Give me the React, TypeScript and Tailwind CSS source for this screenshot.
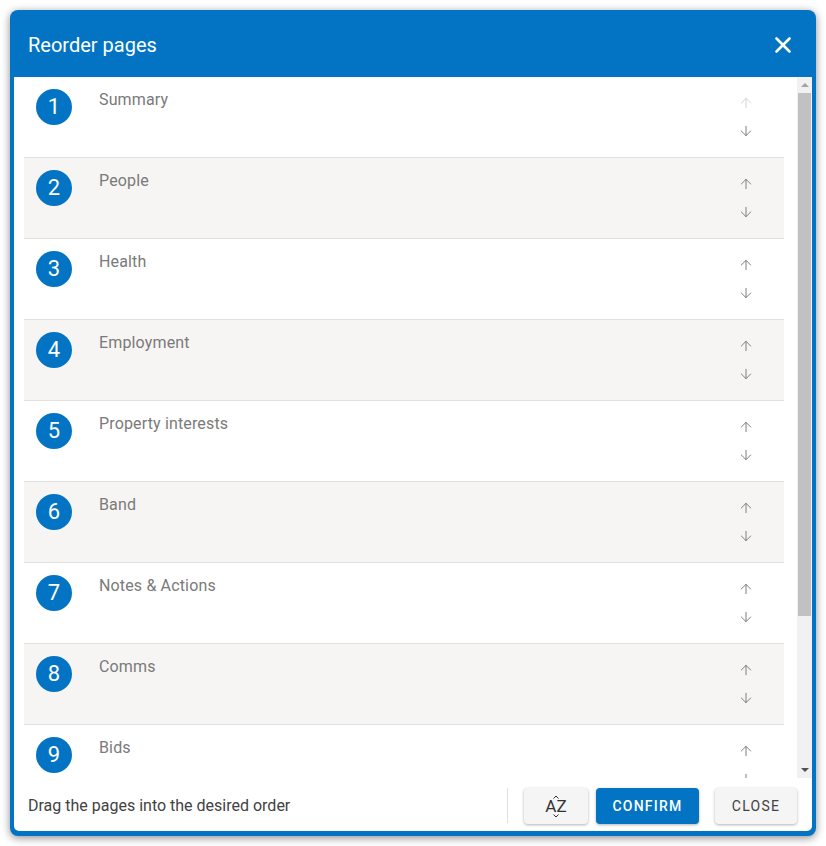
import { ArrowDown, ArrowUp, X } from "lucide-react";

const pages = [
  "Summary",
  "People",
  "Health",
  "Employment",
  "Property interests",
  "Band",
  "Notes & Actions",
  "Comms",
  "Bids",
];

function PageRow({ index, name }: { index: number; name: string }) {
  const shaded = index % 2 === 1;
  return (
    <div
      className={`flex h-[81px] shrink-0 border-b border-[#e0e0e0] pt-[12px] pl-[12px] ${
        shaded ? "bg-[#f6f5f4]" : "bg-white"
      }`}
    >
      <span className="flex h-[36px] w-[36px] shrink-0 items-center justify-center rounded-full bg-[#0274c3] text-[22px] leading-none text-white">
        {index + 1}
      </span>
      <span className="ml-[27px] mt-[1px] flex-1 text-[16px] leading-[20px] tracking-[0.15px] text-[#7a7a7a]">{name}</span>
      <div className="mr-[30px] flex w-[16px] flex-col items-center pt-[6px]">
        <ArrowUp size={16} strokeWidth={1.4} className={index === 0 ? "text-[#cfcfcf]" : "text-[#757575]"} />
        <ArrowDown size={16} strokeWidth={1.4} className="mt-[12px] text-[#757575]" />
      </div>
    </div>
  );
}

function FakeScrollbar() {
  return (
    <div className="flex w-[15px] shrink-0 flex-col bg-[#f1f1f1]">
      <div className="flex h-[16px] items-center justify-center">
        <span className="h-0 w-0 border-x-[4px] border-b-[4px] border-x-transparent border-b-[#a3a3a3]" />
      </div>
      <div className="mx-[1px] h-[523px] bg-[#c1c1c1]" />
      <div className="flex-1" />
      <div className="flex h-[16px] items-center justify-center">
        <span className="h-0 w-0 border-x-[4px] border-t-[4px] border-x-transparent border-t-[#505050]" />
      </div>
    </div>
  );
}

export default function App() {
  return (
    <div className="h-[846px] w-[826px] bg-white p-[10px] font-['Roboto',_'Liberation_Sans',_sans-serif]">
      <div className="flex h-[826px] w-[806px] flex-col rounded-[8px] bg-[#0274c3] shadow-[0_2px_9px_rgba(0,0,0,0.45)]">
        <header className="flex h-[67px] shrink-0 items-center justify-between pl-[18px] pr-[20px] pt-[2px]">
          <h1 className="text-[20px] text-white">Reorder pages</h1>
          <X size={26} strokeWidth={2.4} className="text-white" />
        </header>
        <div className="mx-[4px] mb-[5px] flex flex-1 flex-col overflow-hidden rounded-b-[5px] bg-white">
          <div className="flex h-[701px] shrink-0">
            <div className="flex flex-1 flex-col overflow-hidden pl-[10px] pr-[13px]">
              {pages.map((name, i) => (
                <PageRow key={name} index={i} name={name} />
              ))}
            </div>
            <FakeScrollbar />
          </div>
          <footer className="flex flex-1 items-start pt-[10px]">
            <p className="ml-[14px] mt-[6px] flex-1 text-[16px] leading-[24px] text-[#424242]">Drag the pages into the desired order</p>
            <div className="h-[35px] w-px bg-[#e0e0e0]" />
            <button className="ml-[16px] flex h-[36px] w-[64px] items-center justify-center rounded-[4px] bg-[#f5f5f5] shadow-[0_1px_3px_rgba(0,0,0,0.3)]">
              <span className="relative flex text-[17px] leading-none text-[#333]">
                <span>A</span>
                <span>Z</span>
                <svg className="absolute left-1/2 top-[-3px] -translate-x-1/2" width="6" height="4" viewBox="0 0 6 4">
                  <path d="M0.5 3.5 L3 1 L5.5 3.5" fill="none" stroke="#333" strokeWidth="1" />
                </svg>
                <svg className="absolute bottom-[-3px] left-1/2 -translate-x-1/2" width="6" height="4" viewBox="0 0 6 4">
                  <path d="M0.5 0.5 L3 3 L5.5 0.5" fill="none" stroke="#333" strokeWidth="1" />
                </svg>
              </span>
            </button>
            <button className="ml-[8px] h-[36px] w-[103px] rounded-[4px] bg-[#0274c3] text-[14px] font-medium tracking-[1.25px] text-white shadow-[0_1px_3px_rgba(0,0,0,0.3)]">
              CONFIRM
            </button>
            <button className="ml-[16px] mr-[15px] h-[36px] w-[82px] rounded-[4px] bg-[#f5f5f5] text-[14px] tracking-[1.25px] text-[#424242] shadow-[0_1px_3px_rgba(0,0,0,0.3)]">
              CLOSE
            </button>
          </footer>
        </div>
      </div>
    </div>
  );
}
